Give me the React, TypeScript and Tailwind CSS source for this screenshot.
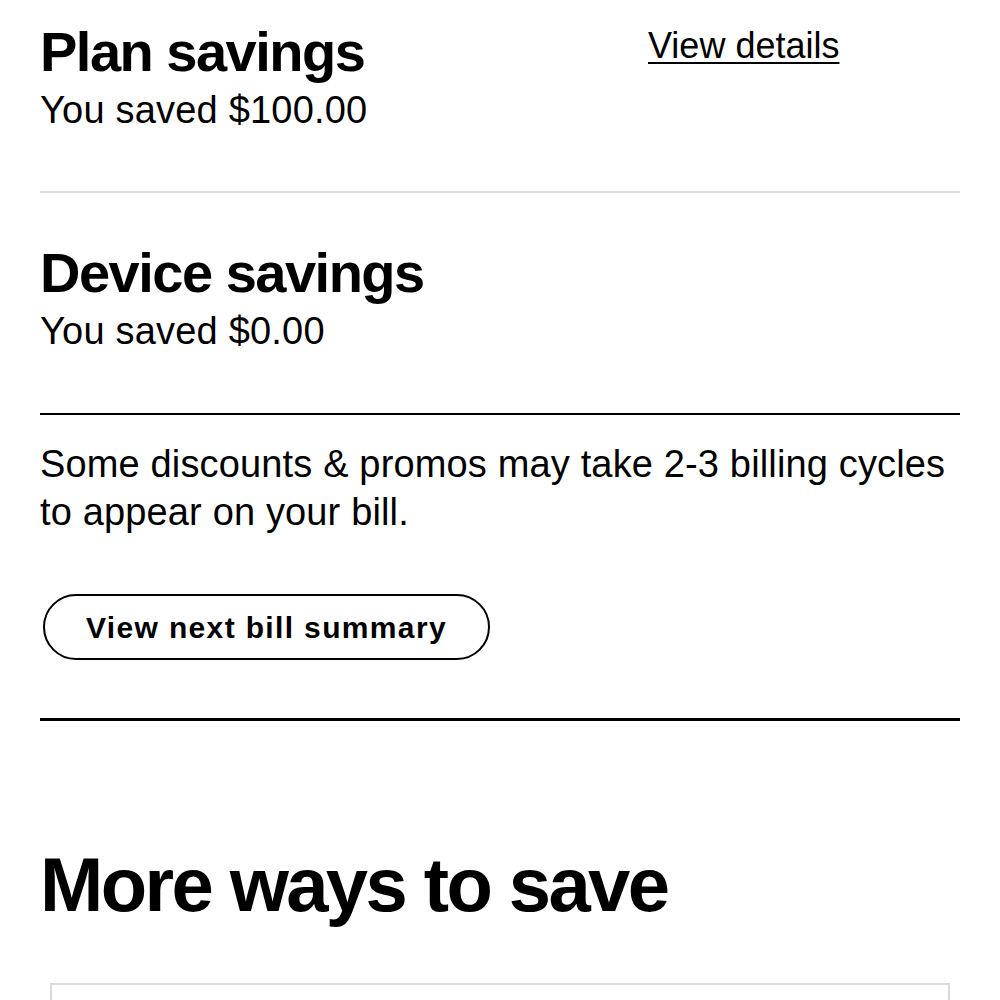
import React from "react";

const SavingsRow = ({
  title,
  amount,
  link,
}: {
  title: string;
  amount: string;
  link?: string;
}) => (
  <div className="grid grid-cols-[1fr_312px]">
    <div>
      <h2 className="text-[56px] leading-[60px] font-bold tracking-[-1.5px]">{title}</h2>
      <p className="mt-[6px] text-[38px] leading-[44px] tracking-[0.2px]">You saved {amount}</p>
    </div>
    {link && (
      <div className="mt-[2px]">
        <a href="#" className="text-[36px] leading-[44px] underline underline-offset-[4px] decoration-2">
          {link}
        </a>
      </div>
    )}
  </div>
);

export default function App() {
  return (
    <div
      className="bg-white text-black min-h-screen px-[40px] pt-[22px]"
      style={{ fontFamily: '"Liberation Sans", Arial, sans-serif' }}
    >
      <SavingsRow title="Plan savings" amount="$100.00" link="View details" />
      <div className="mt-[59px] h-[2px] bg-[#d8dada]" />

      <div className="mt-[50px]">
        <SavingsRow title="Device savings" amount="$0.00" />
      </div>
      <div className="mt-[60px] h-[2px] bg-black" />

      <p className="mt-[25px] text-[38px] leading-[48px] tracking-[0.15px]">
        Some discounts &amp; promos may take 2-3 billing cycles to appear on your bill.
      </p>

      <button className="mt-[58px] ml-[3px] h-[66px] flex items-center rounded-full border-2 border-black px-[41px] text-[30px] font-bold tracking-[0.045em]">
        View next bill summary
      </button>

      <div className="mt-[58px] h-[3px] bg-black" />

      <h2 className="mt-[124px] text-[76px] leading-[80px] font-bold tracking-[-2.6px]">
        More ways to save
      </h2>

      <div className="mt-[58px] mx-[10px] h-[200px] border-2 border-[#d8dada]" />
    </div>
  );
}
